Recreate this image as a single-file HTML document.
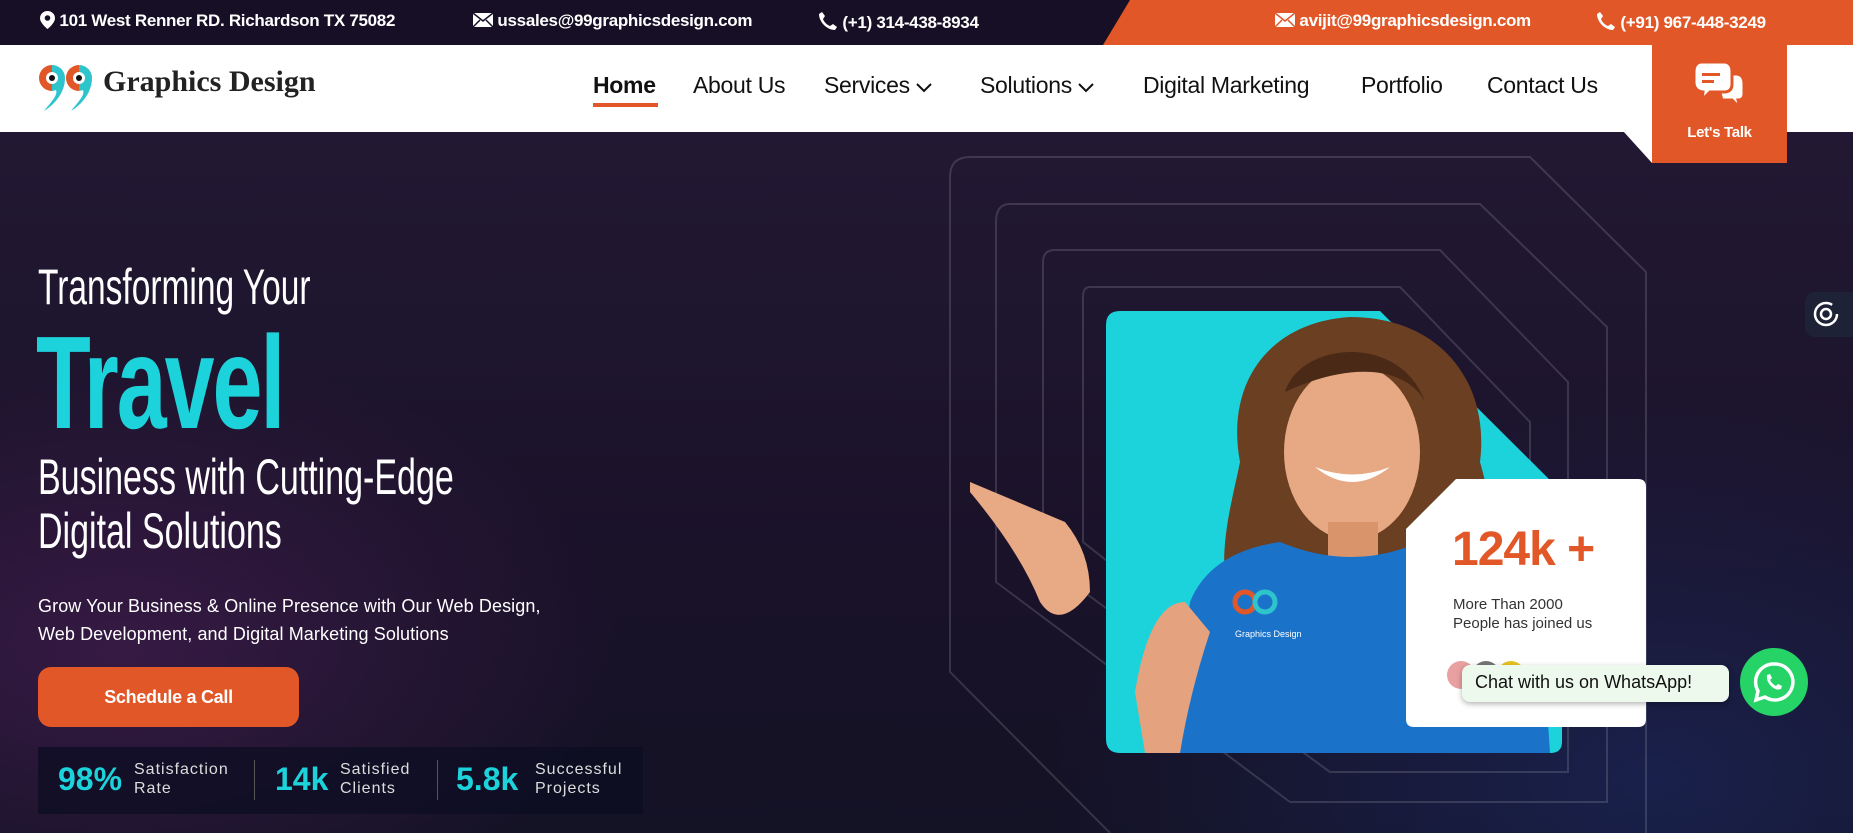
<!DOCTYPE html>
<html><head><meta charset="utf-8">
<style>
*{margin:0;padding:0;box-sizing:border-box}
body{width:1853px;height:833px;overflow:hidden;position:relative;font-family:"Liberation Sans",sans-serif;background:#1c1428}
.abs{position:absolute}
.top{left:0;top:0;width:1853px;height:45px;background:#170f26;color:#fff;font-size:17px;font-weight:bold}
.top span{position:absolute;top:11px;white-space:nowrap;letter-spacing:-0.3px}
.nav{left:0;top:45px;width:1853px;height:87px;background:#fff}
.nav a{position:absolute;top:27px;font-size:23px;color:#111;text-decoration:none;white-space:nowrap;letter-spacing:-0.3px}
.hero{left:0;top:132px;width:1853px;height:701px;background:radial-gradient(ellipse 500px 300px at 120px 520px,rgba(110,40,120,.35),transparent),radial-gradient(ellipse 600px 400px at 1650px 650px,rgba(30,50,120,.45),transparent),linear-gradient(180deg,#221833,#1a1229 60%,#141225)}
.cond{transform-origin:left top;white-space:nowrap;color:#fff}
</style></head><body>
<div class="abs top">
  <svg class="abs" style="left:1103px;top:0" width="750" height="45"><polygon points="27,0 750,0 750,45 0,45" fill="#e25727"/></svg>
  <span style="left:40px"><svg width="15" height="18" viewBox="0 0 15 18" style="vertical-align:-3px"><path d="M7.5 0C3.4 0 0 3.2 0 7.2 0 12 7.5 18 7.5 18S15 12 15 7.2C15 3.2 11.6 0 7.5 0z" fill="#fff"/><circle cx="7.5" cy="7" r="2.8" fill="#170f26"/></svg> 101 West Renner RD. Richardson TX 75082</span>
  <span style="left:473px"><svg width="20" height="14" viewBox="0 0 20 14" style="vertical-align:-1px"><rect width="20" height="14" fill="#fff"/><path d="M0 0l10 8 10-8M0 14l7-7M20 14l-7-7" stroke="#170f26" stroke-width="1.5" fill="none"/></svg> ussales@99graphicsdesign.com</span>
  <span style="left:818px"><svg width="20" height="20" viewBox="0 0 20 20" style="vertical-align:-3px"><path d="M4 1l3 4-2 3c1 3 4 6 7 7l3-2 4 3-2 3C9 19 1 11 1 3z" fill="#fff"/></svg> (+1) 314-438-8934</span>
  <span style="left:1275px"><svg width="20" height="14" viewBox="0 0 20 14" style="vertical-align:-1px"><rect width="20" height="14" fill="#fff"/><path d="M0 0l10 8 10-8M0 14l7-7M20 14l-7-7" stroke="#e25727" stroke-width="1.5" fill="none"/></svg> avijit@99graphicsdesign.com</span>
  <span style="left:1596px"><svg width="20" height="20" viewBox="0 0 20 20" style="vertical-align:-3px"><path d="M4 1l3 4-2 3c1 3 4 6 7 7l3-2 4 3-2 3C9 19 1 11 1 3z" fill="#fff"/></svg> (+91) 967-448-3249</span>
</div>
<div class="abs nav">
  <svg class="abs" style="left:38px;top:18px" width="60" height="50" viewBox="0 0 60 50">
    <path d="M14 2A13 13 0 0 0 14 28Z" fill="#e25727"/><path d="M14 2A13 13 0 0 1 27 15C27 30 16 42 6 48C14 38 20 32 18 27A13 13 0 0 1 14 28Z" fill="#2ec4cc"/>
    <circle cx="14" cy="15" r="6" fill="#fff"/><circle cx="14" cy="15" r="3" fill="#111"/>
    <path d="M41 2A13 13 0 0 0 41 28Z" fill="#e25727"/><path d="M41 2A13 13 0 0 1 54 15C54 30 43 42 33 48C41 38 47 32 45 27A13 13 0 0 1 41 28Z" fill="#2ec4cc"/>
    <circle cx="41" cy="15" r="6" fill="#fff"/><circle cx="41" cy="15" r="3" fill="#111"/>
  </svg>
  <div class="abs" style="left:103px;top:20px;font-family:'Liberation Serif',serif;font-size:30px;font-weight:bold;color:#222;white-space:nowrap">Graphics Design</div>
  <a style="left:593px;font-weight:bold">Home</a>
  <div class="abs" style="left:593px;top:58px;width:65px;height:4px;background:#e25727"></div>
  <a style="left:693px">About Us</a>
  <a style="left:824px">Services <svg width="16" height="10" viewBox="0 0 16 10"><path d="M1 1l7 7 7-7" stroke="#111" stroke-width="2" fill="none"/></svg></a>
  <a style="left:980px">Solutions <svg width="16" height="10" viewBox="0 0 16 10"><path d="M1 1l7 7 7-7" stroke="#111" stroke-width="2" fill="none"/></svg></a>
  <a style="left:1143px">Digital Marketing</a>
  <a style="left:1361px">Portfolio</a>
  <a style="left:1487px">Contact Us</a>
</div>
<div class="abs hero">
  <svg class="abs" style="left:940px;top:0" width="760" height="701">
    <g fill="none" stroke="rgba(255,255,255,.14)" stroke-width="2">
      <path d="M30 25H590L706 140V701M30 25Q10 25 10 45V540L170 701"/>
      <path d="M70 72H540L667 195V670H350L56 450V90Q56 72 70 72Z"/>
      <path d="M115 118H500L628 250V640H390L103 430V130Q103 118 115 118Z"/>
      <path d="M150 155H460L590 290V620H410L143 410V165Q143 155 150 155Z"/>
    </g>
    <path d="M180 179H440L622 360V610Q622 621 610 621H180Q166 621 166 607V193Q166 179 180 179Z" fill="#1dd3db"/>
    <path d="M300 330C285 250 330 190 410 185C500 185 550 250 540 330C560 400 560 460 530 500L300 500C270 440 290 380 300 330Z" fill="#6b3f22"/>
    <ellipse cx="412" cy="320" rx="68" ry="88" fill="#e7a983"/>
    <path d="M345 260C360 210 460 200 485 270C470 240 420 225 345 260Z" fill="#4a2a16"/>
    <path d="M375 335Q412 365 450 335Q412 350 375 335Z" fill="#fff"/>
    <rect x="388" y="390" width="50" height="50" fill="#d9946c"/>
    <path d="M230 621L250 470Q270 420 340 410Q412 440 480 410Q560 420 600 470L610 621Z" fill="#1a73c9"/>
    <path d="M195 560Q210 470 245 470L270 500Q250 560 240 621H205Z" fill="#e4a27e"/>
    <path d="M30 350L125 390Q150 420 150 460Q120 500 100 470Q80 420 30 360Z" fill="#e8a985"/>
    <text x="295" y="505" font-size="9" fill="#fff" font-family="Liberation Sans">Graphics Design</text>
    <circle cx="305" cy="470" r="10" fill="none" stroke="#e25727" stroke-width="5"/><circle cx="325" cy="470" r="10" fill="none" stroke="#2ec4cc" stroke-width="5"/>
  </svg>
  <svg class="abs" style="left:1406px;top:347px" width="240" height="248"><path d="M50 0H232Q240 0 240 8V240Q240 248 232 248H8Q0 248 0 240V50Z" fill="#fff"/>
    <circle cx="55" cy="196" r="14" fill="#e8a0a0"/><circle cx="80" cy="196" r="14" fill="#777"/><circle cx="105" cy="196" r="14" fill="#e8c320"/></svg>
  <div class="abs" style="left:1452px;top:390px;font-size:48px;font-weight:bold;color:#e25727;letter-spacing:-1px">124k +</div>
  <div class="abs" style="left:1453px;top:463px;font-size:15px;color:#333;line-height:19px">More Than 2000<br>People has joined us</div>
  <div class="abs" style="left:1462px;top:533px;width:267px;height:37px;background:#eef9ee;border-radius:8px;box-shadow:0 2px 6px rgba(0,0,0,.3);font-size:18px;color:#111;padding:7px 0 0 13px;white-space:nowrap">Chat with us on WhatsApp!</div>
  <svg class="abs" style="left:1740px;top:516px" width="68" height="68" viewBox="0 0 68 68"><circle cx="34" cy="34" r="34" fill="#25d366"/><path d="M34 16A18 18 0 0 0 18 43L16 52 25 49A18 18 0 1 0 34 16Z" fill="none" stroke="#fff" stroke-width="3.5"/><path d="M27 27Q26 33 31 38Q36 43 41 41L42 38 38 36 36 38Q32 36 30 32L32 30 30 26Z" fill="#fff"/></svg>
  <div class="abs" style="left:1805px;top:160px;width:48px;height:45px;background:#1e2236;border-radius:10px 0 0 10px"></div>
  <svg class="abs" style="left:1811px;top:167px" width="30" height="30" viewBox="0 0 30 30"><circle cx="15" cy="15" r="11" fill="none" stroke="#fff" stroke-width="2.5" stroke-dasharray="58 12"/><circle cx="15" cy="15" r="5" fill="none" stroke="#fff" stroke-width="2.5"/></svg>

  <div class="abs cond" style="left:38px;top:126px;font-size:50px;font-weight:300;transform:scaleX(.67)">Transforming Your</div>
  <div class="abs cond" style="left:36px;top:175px;font-size:132px;font-weight:bold;color:#1dd3db;transform:scaleX(.68);letter-spacing:-3px">Travel</div>
  <div class="abs cond" style="left:38px;top:318px;font-size:50px;line-height:54px;transform:scaleX(.68)">Business with Cutting-Edge<br>Digital Solutions</div>
  <div class="abs" style="left:38px;top:460px;font-size:18px;line-height:28px;color:#fff;letter-spacing:0.1px;white-space:nowrap">Grow Your Business &amp; Online Presence with Our Web Design,<br>Web Development, and Digital Marketing Solutions</div>
  <div class="abs" style="left:38px;top:535px;width:261px;height:60px;background:#e25727;border-radius:13px;color:#fff;font-size:18px;font-weight:bold;text-align:center;line-height:60px;letter-spacing:-0.3px">Schedule a Call</div>
  <div class="abs" style="left:38px;top:615px;width:605px;height:67px;background:rgba(12,14,35,.75)">
    <div class="abs" style="left:20px;top:14px;font-size:32px;font-weight:bold;color:#1dd3db">98%</div>
    <div class="abs" style="left:96px;top:13px;font-size:16px;color:#ddd;line-height:19px;letter-spacing:1px">Satisfaction<br>Rate</div>
    <div class="abs" style="left:216px;top:13px;width:1px;height:40px;background:#555"></div>
    <div class="abs" style="left:237px;top:14px;font-size:32px;font-weight:bold;color:#1dd3db">14k</div>
    <div class="abs" style="left:302px;top:13px;font-size:16px;color:#ddd;line-height:19px;letter-spacing:1px">Satisfied<br>Clients</div>
    <div class="abs" style="left:399px;top:13px;width:1px;height:40px;background:#555"></div>
    <div class="abs" style="left:418px;top:14px;font-size:32px;font-weight:bold;color:#1dd3db">5.8k</div>
    <div class="abs" style="left:497px;top:13px;font-size:16px;color:#ddd;line-height:19px;letter-spacing:1px">Successful<br>Projects</div>
  </div>
</div>
<svg class="abs" style="left:1623px;top:131px" width="30" height="33"><polygon points="0,0 29,0 29,32" fill="#fff"/></svg>
<div class="abs" style="left:1652px;top:45px;width:135px;height:118px;background:#e25727"></div>
<svg class="abs" style="left:1692px;top:60px" width="56" height="50" viewBox="0 0 56 50"><path d="M22 14H44Q52 14 52 24V34Q52 40 46 40L48 48 40 40H30Z" fill="#fff" stroke="#e25727" stroke-width="3"/><path d="M10 2H32Q40 2 40 12V24Q40 32 32 32H18L10 40 11 32Q2 31 2 22V12Q2 2 10 2Z" fill="#fff" stroke="#e25727" stroke-width="3"/><rect x="10" y="13" width="18" height="3" fill="#e25727"/><rect x="10" y="20" width="12" height="3" fill="#e25727"/></svg>
<div class="abs" style="left:1652px;top:124px;width:135px;text-align:center;color:#fff;font-size:15px;font-weight:bold;letter-spacing:-0.3px">Let's Talk</div>
</body></html>
